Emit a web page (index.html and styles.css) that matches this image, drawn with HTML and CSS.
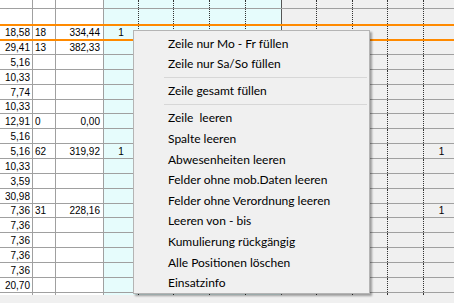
FILE: index.html
```html
<!DOCTYPE html>
<html lang="de">
<head>
    <meta charset="UTF-8">
    <title>Einsatzplan</title>
    <link rel="stylesheet" href="styles.css">
</head>
<body>
    <div class="sheet">
        <div class="grid">
            <div class="row h9">
                <div class="cell ca"></div><div class="cell cb"></div><div class="cell cc"></div>
                <div class="cell cy w35"></div><div class="cell cy w35"></div><div class="cell cy w36"></div><div class="cell cy w36"></div><div class="cell cy w36 edge"></div>
                <div class="cell gr w35"></div><div class="cell gr w36"></div><div class="cell gr w35"></div><div class="cell gr w36"></div><div class="cell gr w36"></div>
            </div>
            <div class="row h15 nob">
                <div class="cell ca"></div><div class="cell cb"></div><div class="cell cc"></div>
                <div class="cell cy w35"></div><div class="cell cy w35"></div><div class="cell cy w36"></div><div class="cell cy w36"></div><div class="cell cy w36 edge"></div>
                <div class="cell gr w35"></div><div class="cell gr w36"></div><div class="cell gr w35"></div><div class="cell gr w36"></div><div class="cell gr w36"></div>
            </div>
            <div class="row sel">
                <div class="cell ca">18,58</div><div class="cell cb">18</div><div class="cell cc">334,44</div>
                <div class="cell cy w35 mid">1</div><div class="cell cy w35"></div><div class="cell cy w36"></div><div class="cell cy w36"></div><div class="cell cy w36 edge"></div>
                <div class="cell gr w35"></div><div class="cell gr w36"></div><div class="cell gr w35"></div><div class="cell gr w36"></div><div class="cell gr w36"></div>
            </div>
            <div id="rows"></div>
        </div>

        <div class="menu">
            <div class="item">Zeile nur Mo - Fr füllen</div>
            <div class="item">Zeile nur Sa/So füllen</div>
            <div class="sep"></div>
            <div class="item">Zeile gesamt füllen</div>
            <div class="sep"></div>
            <div class="item">Zeile  leeren</div>
            <div class="item">Spalte leeren</div>
            <div class="item">Abwesenheiten leeren</div>
            <div class="item">Felder ohne mob.Daten leeren</div>
            <div class="item">Felder ohne Verordnung leeren</div>
            <div class="item">Leeren von - bis</div>
            <div class="item">Kumulierung rückgängig</div>
            <div class="item">Alle Positionen löschen</div>
            <div class="item">Einsatzinfo</div>
        </div>
    </div>

    <script>
        document.addEventListener('DOMContentLoaded', function() {
            // stunden, anzahl, betrag, erste spalte, letzte spalte, zeilenhoehe
            const data = [
                ['29,41', '13', '382,33', '', '', 14],
                ['5,16', '', '', '', '', 15],
                ['10,33', '', '', '', '', 15],
                ['7,74', '', '', '', '', 15],
                ['10,33', '', '', '', '', 14],
                ['12,91', '0', '0,00', '', '', 15],
                ['5,16', '', '', '', '', 15],
                ['5,16', '62', '319,92', '1', '1', 15],
                ['10,33', '', '', '', '', 15],
                ['3,59', '', '', '', '', 15],
                ['30,98', '', '', '', '', 15],
                ['7,36', '31', '228,16', '', '1', 14],
                ['7,36', '', '', '', '', 15],
                ['7,36', '', '', '', '', 15],
                ['7,36', '', '', '', '', 15],
                ['7,36', '', '', '', '', 15],
                ['20,70', '', '', '', '', 15],
                ['', '', '', '', '', 15]
            ];
            const cyan = ['w35', 'w35', 'w36', 'w36', 'w36 edge'];
            const gray = ['w35', 'w36', 'w35', 'w36', 'w36'];
            const rows = document.getElementById('rows');

            data.forEach(function(d) {
                const row = document.createElement('div');
                row.className = 'row h' + d[5];

                let html = '<div class="cell ca">' + d[0] + '</div>' +
                    '<div class="cell cb">' + d[1] + '</div>' +
                    '<div class="cell cc">' + d[2] + '</div>';
                cyan.forEach(function(w, i) {
                    html += '<div class="cell cy ' + w + ' mid">' + (i === 0 ? d[3] : '') + '</div>';
                });
                gray.forEach(function(w, i) {
                    html += '<div class="cell gr ' + w + ' mid">' + (i === 4 ? d[4] : '') + '</div>';
                });
                row.innerHTML = html;
                rows.appendChild(row);
            });
        });
    </script>
</body>
</html>
```

FILE: styles.css
```css
body {
    margin: 0;
    background-color: #f0f0f0;
    font-family: "Liberation Sans", Arial, sans-serif;
    overflow: hidden;
}
.sheet {
    position: relative;
    width: 454px;
    height: 303px;
    overflow: hidden;
}
.grid {
    height: 295px;
    overflow: hidden;
}
.row {
    display: flex;
    box-sizing: border-box;
    width: 460px;
    border-bottom: 1px solid #a0a0a0;
    font-size: 10px;
    color: #000;
}
.h9 { height: 9px; }
.h14 { height: 14px; }
.h15 { height: 15px; }
.nob { border-bottom: none; }
.sel {
    height: 17px;
    border-top: 2px solid #ff8a00;
    border-bottom: 2px solid #ff8a00;
}
.cell {
    box-sizing: border-box;
    display: flex;
    align-items: center;
    white-space: nowrap;
}
.ca {
    width: 33px;
    justify-content: flex-end;
    padding-right: 2px;
    background: #fff;
    border-right: 1px solid #a0a0a0;
}
.cb {
    width: 23px;
    padding-left: 2px;
    background: #fff;
    border-right: 1px solid #a0a0a0;
}
.cc {
    width: 48px;
    justify-content: flex-end;
    padding-right: 3px;
    background: #fff;
    border-right: 1px solid #a0a0a0;
}
.cy {
    background: #e6fcfc;
    border-right: 1px dotted #333;
}
.gr {
    background: #f0f0f0;
    border-right: 1px dotted #333;
}
.edge {
    border-right: 1px solid #555;
}
.mid {
    justify-content: center;
}
.w35 { width: 35px; }
.w36 { width: 36px; }

.menu {
    position: absolute;
    left: 133px;
    top: 30px;
    width: 237px;
    box-sizing: border-box;
    padding: 2px 0 0;
    background: #f0f0f0;
    border: 1px solid #b4b4b4;
    box-shadow: 2px 2px 2px rgba(0, 0, 0, 0.35);
    font-family: Lato, "Noto Sans", sans-serif;
    font-size: 12px;
    color: #000;
}
.item {
    height: 20.6px;
    display: flex;
    align-items: center;
    padding-left: 34px;
    white-space: pre;
}
.sep {
    height: 6.4px;
    margin-left: 30px;
    margin-right: 2px;
    background: linear-gradient(#d7d7d7, #d7d7d7) center / 100% 1px no-repeat;
}
```
